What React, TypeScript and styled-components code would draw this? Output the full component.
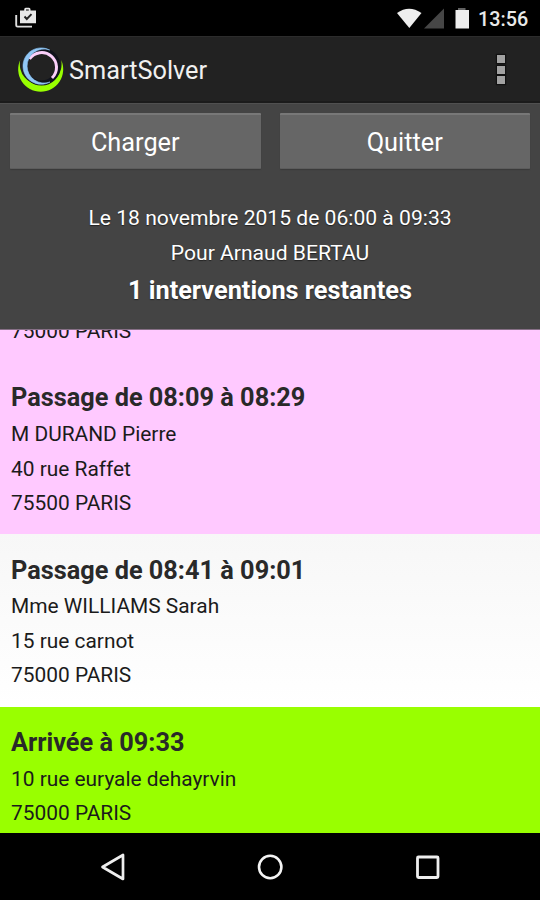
import React from "react";
import styled, { createGlobalStyle } from "styled-components";

const GlobalStyle = createGlobalStyle`
  * { box-sizing: border-box; }
  html, body { margin: 0; padding: 0; background: #000; }
  body { font-family: Roboto, "Liberation Sans", sans-serif; }
`;

const Screen = styled.div`
  width: 540px;
  height: 900px;
  display: flex;
  flex-direction: column;
  overflow: hidden;
  background: #000;
`;

const StatusBar = styled.div`
  flex: 0 0 36px;
  display: flex;
  align-items: center;
  padding: 0 11px 0 14px;
  background: #000;
`;

const StatusIcons = styled.div`
  margin-left: auto;
  display: flex;
  align-items: center;
`;

const Clock = styled.span`
  width: 51px;
  margin: 3px 0 0 8px;
  font-size: 19.8px;
  line-height: 24px;
  font-weight: 500;
  color: #e9e9e9;
  white-space: nowrap;
`;

const ActionBar = styled.header`
  flex: 0 0 67px;
  display: flex;
  align-items: center;
  padding: 0 35px 0 16px;
  background: #222;
  border-top: 1px solid #2c2c2c;
  border-bottom: 2px solid #1b1b1b;
`;

const AppTitle = styled.h1`
  margin: 4px 0 0 4px;
  font-size: 25.3px;
  line-height: 30px;
  font-weight: 400;
  color: #f0f0f0;
`;

const Overflow = styled.div`
  margin: 1px 0 0 auto;
  display: grid;
  gap: 2.5px;
`;

const OverflowDot = styled.span`
  width: 8px;
  height: 8px;
  background: #a2a2a2;
  box-shadow: 0 0 1px 1px #111;
`;

const Header = styled.section`
  flex: 0 0 226px;
  background: #444;
  border-top: 1px solid #505050;
`;

const Buttons = styled.div`
  display: grid;
  grid-template-columns: 1fr 1fr;
  gap: 19px;
  padding: 9px 10px 0;
`;

const Button = styled.button`
  height: 56px;
  padding: 2px 0 0;
  border: 0;
  border-top: 2px solid #787878;
  border-bottom: 1px solid #5c5c5c;
  border-radius: 1px;
  background: #666;
  box-shadow: 0 1px 1px #3a3a3a;
  color: #fff;
  font-family: inherit;
  font-size: 25.3px;
`;

const Summary = styled.div`
  padding-top: 32px;
  text-align: center;
  color: #fff;
`;

const SummaryLine = styled.div`
  font-size: 21.1px;
  line-height: 34.5px;
  text-shadow: 0 1px 1px #222;
`;

const SummaryStrong = styled.div`
  font-size: 25.3px;
  line-height: 42px;
  font-weight: 700;
  text-shadow: 0 1px 1px #222;
`;

const List = styled.main`
  flex: 0 0 504px;
  display: flex;
  flex-direction: column;
  justify-content: flex-end;
  overflow: hidden;
  border-top: 1px solid #877087;
`;

const tones = { pink: "#ffc9ff", white: "linear-gradient(#f7f7f7, #fff)", green: "#99ff00" };

const Stop = styled.article<{ $tone: keyof typeof tones; $last?: boolean }>`
  flex: none;
  padding: 18.3px 11px ${(p) => (p.$last ? 2.5 : 13.75)}px;
  background: ${(p) => tones[p.$tone]};
  color: #1b1b1b;
`;

const StopTitle = styled.h2`
  margin: 0 0 0.7px;
  font-size: 25.3px;
  line-height: 36px;
  font-weight: 700;
  color: #292929;
`;

const StopLine = styled.div`
  font-size: 20.9px;
  line-height: 34.5px;
`;

const NavBar = styled.nav`
  flex: 0 0 67px;
  display: grid;
  grid-template-columns: repeat(3, 157px);
  justify-content: center;
  align-items: center;
  justify-items: center;
  background: #000;
`;

const stops: { title?: string; lines: string[]; tone: keyof typeof tones; last?: boolean }[] = [
  { lines: ["75000 PARIS"], tone: "pink" },
  { title: "Passage de 08:09 à 08:29", lines: ["M DURAND Pierre", "40 rue Raffet", "75500 PARIS"], tone: "pink" },
  { title: "Passage de 08:41 à 09:01", lines: ["Mme WILLIAMS Sarah", "15 rue carnot", "75000 PARIS"], tone: "white" },
  { title: "Arrivée à 09:33", lines: ["10 rue euryale dehayrvin", "75000 PARIS"], tone: "green", last: true },
];

function ShopIcon() {
  return (
    <svg width="24" height="24" viewBox="0 0 24 24">
      <path d="M2.200 9V19.200Q2.200 20.600 3.600 20.600H18" fill="none" stroke="#dedede" strokeWidth="1.900" />
      <path d="M10.200 4.500V3.500Q10.200 1.800 11.700 1.800H15Q16.500 1.800 16.500 3.500V4.500H22V17.200H6V4.500ZM12 4.500H14.800V3.400H12Z" fill="#e8e8e8" fillRule="evenodd" />
      <path d="M10.500 10.500L12.800 13L17.500 8.200" fill="none" stroke="#222" strokeWidth="1.900" />
    </svg>
  );
}

function Logo() {
  return (
    <svg width="49" height="50" viewBox="0 0 49 50">
      <path d="M4.200 16A22.500 22.500 0 1 0 45.200 16A20.900 20.900 0 1 1 4.200 16Z" fill="#99ff00" />
      <circle cx="25.500" cy="22.500" r="16.500" fill="none" stroke="#10131c" strokeWidth="5" />
      <path d="M13.500 15A14.800 14.800 0 1 1 36 34" fill="none" stroke="#fbd0fa" strokeWidth="3" />
      <path d="M33.700 6A18.200 18.200 0 1 0 34 38A17 17 0 1 1 33.700 6Z" fill="#91c7f5" stroke="#91c7f5" strokeWidth="0.600" />
    </svg>
  );
}

export default function App() {
  return (
    <Screen>
      <GlobalStyle />
      <StatusBar>
        <ShopIcon />
        <StatusIcons>
          <svg width="76" height="24" viewBox="0 0 76 24">
            <path d="M3 7Q15 -1.500 27.500 7L15.300 22Z" fill="#eee" />
            <path d="M30 22.500L50 2.500V22.500Z" fill="#464646" />
            <path d="M64 2H71.500V4.500H64Z" fill="#626262" />
            <path d="M61.500 4H75V22.500H61.500Z" fill="#eee" />
          </svg>
          <Clock>13:56</Clock>
        </StatusIcons>
      </StatusBar>
      <ActionBar>
        <Logo />
        <AppTitle>SmartSolver</AppTitle>
        <Overflow>
          <OverflowDot />
          <OverflowDot />
          <OverflowDot />
        </Overflow>
      </ActionBar>
      <Header>
        <Buttons>
          <Button>Charger</Button>
          <Button>Quitter</Button>
        </Buttons>
        <Summary>
          <SummaryLine>Le 18 novembre 2015 de 06:00 à 09:33</SummaryLine>
          <SummaryLine>Pour Arnaud BERTAU</SummaryLine>
          <SummaryStrong>1 interventions restantes</SummaryStrong>
        </Summary>
      </Header>
      <List>
        {stops.map((s, index) => (
          <Stop key={index} $tone={s.tone} $last={s.last}>
            {s.title && <StopTitle>{s.title}</StopTitle>}
            {s.lines.map((line) => (
              <StopLine key={line}>{line}</StopLine>
            ))}
          </Stop>
        ))}
      </List>
      <NavBar>
        <svg width="28" height="30" viewBox="0 0 28 30">
          <path d="M24 3V27L3.500 15Z" fill="none" stroke="#eee" strokeWidth="2.700" strokeLinejoin="round" />
        </svg>
        <svg width="28" height="28" viewBox="0 0 28 28">
          <circle cx="14.200" cy="14" r="11.200" fill="none" stroke="#f4f4f4" strokeWidth="2.600" />
        </svg>
        <svg width="28" height="28" viewBox="0 0 28 28">
          <rect x="4.500" y="4" width="20.500" height="20.500" rx="1" fill="none" stroke="#eee" strokeWidth="2.800" />
        </svg>
      </NavBar>
    </Screen>
  );
}
